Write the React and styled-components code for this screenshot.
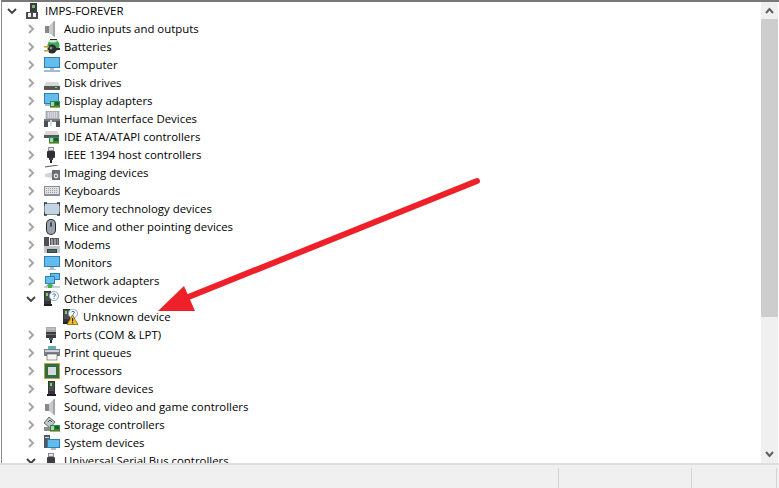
import React from 'react';
import styled, { createGlobalStyle } from 'styled-components';

const GlobalStyle = createGlobalStyle`
  html, body {
    margin: 0;
    padding: 0;
    background: #fff;
  }
`;

const Blue = ({ x = 1, y = 1, w = 14, h = 10 }) => (
  <>
    <rect x={x} y={y} width={w} height={h} fill="#2c7fb8" />
    <rect x={x + 1} y={y + 1} width={w - 2} height={h - 2} fill="#62bcec" />
  </>
);

const Card = ({ x = 6, y = 8 }) => (
  <>
    <rect x={x} y={y} width="10" height="7" fill="#2f8a4f" />
    <rect x={x + 1} y={y + 1} width="3" height="4" fill="#a5d6a9" />
    <rect x={x + 5} y={y + 1} width="4" height="3" fill="#155f33" />
    <rect x={x} y={y + 6} width="10" height="1" fill="#c8a545" />
  </>
);

const Speaker = () => (
  <>
    <rect x="1" y="5" width="4" height="7" fill="#85898b" />
    <path d="M5 5 L10 0 L11 0 L11 16 L10 16 L5 12 Z" fill="#c8cbcd" />
    <path d="M9 1 L11 0 L11 16 L9 15 Z" fill="#a3a6a8" />
  </>
);

const Tower = ({ x = 2, y = 0 }) => (
  <>
    <rect x={x} y={y} width="7" height="15" fill="#333537" />
    <rect x={x + 1} y={y + 1} width="5" height="9" fill="#4c4f52" />
    <rect x={x + 2} y={y + 2} width="2" height="3" fill="#7ed957" />
    <rect x={x - 1} y={y + 13} width="9" height="2" fill="#1f2022" />
  </>
);

const Question = ({ cx = 11, cy = 5 }) => (
  <>
    <circle cx={cx} cy={cy} r="4.5" fill="#fff" stroke="#8aa9c9" />
    <path d={`M${cx - 1.5} ${cy - 1.5} Q${cx} ${cy - 3} ${cx + 1.5} ${cy - 1.5} Q${cx + 1.5} ${cy} ${cx} ${cy + 0.5} V${cy + 1.2} M${cx} ${cy + 2} V${cy + 3}`} fill="none" stroke="#3f76b5" strokeWidth="1" />
  </>
);

const icons = {
  root: (
    <>
      <rect x="5" y="0" width="7" height="9" fill="#3a3d40" />
      <rect x="7" y="2" width="3" height="3" fill="#6fbf5a" />
      <rect x="1" y="9" width="12" height="7" fill="#4a4d50" />
      <rect x="3" y="10" width="8" height="4" fill="#f1f1f1" />
      <rect x="6" y="10" width="2" height="4" fill="#4a4d50" />
    </>
  ),
  audio: <Speaker />,
  battery: (
    <>
      <ellipse cx="9.5" cy="6.5" rx="6" ry="6.5" fill="#43a85a" />
      <ellipse cx="9" cy="2" rx="4" ry="1.6" fill="#cfe9cf" />
      <rect x="6" y="0" width="7" height="1" fill="#2c2c2c" />
      <circle cx="8" cy="10" r="4.5" fill="#2a2d30" />
      <circle cx="7" cy="9" r="1.5" fill="#8a8d90" />
      <rect x="0" y="7" width="5" height="1.5" fill="#c9a227" />
      <rect x="0" y="11" width="5" height="1.5" fill="#c9a227" />
      <rect x="11" y="9" width="5" height="2" fill="#2a2d30" />
    </>
  ),
  computer: (
    <>
      <Blue x={0} y={0} w={16} h={11} />
      <rect x="6" y="11" width="4" height="2" fill="#b6bcc0" />
      <rect x="0" y="13" width="16" height="2" fill="#9fbcd0" />
    </>
  ),
  disk: (
    <>
      <path d="M2 7 L14 7 L16 11 L0 11 Z" fill="#d8d8d8" />
      <rect x="0" y="11" width="16" height="4" fill="#55585b" />
      <rect x="11" y="12" width="2" height="1" fill="#7ed957" />
    </>
  ),
  display: (
    <>
      <Blue x={0} y={0} w={15} h={11} />
      <rect x="1" y="11" width="6" height="2" fill="#9fbcd0" />
      <Card x={6} y={8} />
    </>
  ),
  hid: (
    <>
      <rect x="2" y="0" width="13" height="8" fill="#b9bdc4" stroke="#7c8088" strokeWidth="0.5" />
      <path d="M4 2 H13 M4 4 H13 M4 6 H13" stroke="#eef0f3" strokeDasharray="1 1" />
      <rect x="0" y="8" width="16" height="3" fill="#767a80" />
      <rect x="0" y="10" width="4" height="6" fill="#4a4e55" />
      <rect x="6" y="9" width="2" height="6" fill="#d7dade" />
      <rect x="12" y="10" width="4" height="6" fill="#4a4e55" />
    </>
  ),
  ide: (
    <>
      <path d="M2 2 L13 2 L15 6 L0 6 Z" fill="#d8d8d8" />
      <rect x="0" y="6" width="15" height="3" fill="#55585b" />
      <Card x={5} y={8} />
    </>
  ),
  ieee: (
    <>
      <rect x="4" y="0" width="6" height="4" fill="#8a8d90" />
      <rect x="5" y="1" width="4" height="2" fill="#e4e4e4" />
      <rect x="3" y="4" width="8" height="7" rx="1" fill="#2f3134" />
      <rect x="5" y="11" width="4" height="2" fill="#3d4043" />
      <rect x="6" y="13" width="2" height="3" fill="#222" />
    </>
  ),
  imaging: (
    <>
      <path d="M1 2 L14 0" stroke="#55585b" strokeWidth="1" />
      <path d="M1 9 L9 7 V13 L1 12 Z" fill="#d2d4d6" />
      <rect x="8" y="5" width="8" height="10" fill="#6a6d70" />
      <circle cx="12" cy="11" r="2.4" fill="#e6e6e6" />
      <circle cx="12" cy="11" r="1.1" fill="#3a6ea5" />
    </>
  ),
  keyboard: (
    <>
      <rect x="0" y="3" width="16" height="10" fill="#8b8e92" />
      <rect x="1" y="4" width="14" height="7" fill="#dfe1e3" />
      <path d="M2 5.5 H14 M2 7.5 H14 M2 9.5 H14" stroke="#9da0a5" strokeDasharray="1 1" />
    </>
  ),
  memory: (
    <>
      <rect x="0.5" y="2.5" width="15" height="11" fill="#c3d4e2" stroke="#7f8e9a" />
      <path d="M0 5 V2 H3 M13 2 H16 V5 M16 11 V14 H13 M3 14 H0 V11" fill="none" stroke="#2f3235" strokeWidth="1.4" />
    </>
  ),
  mouse: (
    <>
      <rect x="2" y="0" width="10" height="16" rx="5" fill="#25282b" />
      <rect x="3" y="1" width="8" height="14" rx="4" fill="#9aa3ad" />
      <rect x="6" y="3" width="2" height="5" rx="1" fill="#4a4e55" />
    </>
  ),
  modem: (
    <>
      <rect x="0" y="0" width="5" height="12" fill="#4d5053" />
      <rect x="6" y="1" width="9" height="7" fill="#55585b" />
      <path d="M7 3 H14 M7 5 H14 M7 7 H14" stroke="#d9dbde" strokeDasharray="2 1" />
      <rect x="0" y="9" width="16" height="7" fill="#c4c7ca" />
      <rect x="3" y="12" width="10" height="4" fill="#3e4144" />
      <path d="M4.5 14 H11.5" stroke="#5dd3e8" strokeDasharray="1 1" />
    </>
  ),
  monitor: (
    <>
      <Blue x={0} y={1} w={16} h={11} />
      <rect x="6" y="12" width="4" height="2" fill="#b6bcc0" />
      <rect x="4" y="14" width="8" height="1" fill="#b6bcc0" />
    </>
  ),
  network: (
    <>
      <Blue x={6} y={0} w={10} h={7} />
      <Blue x={1} y={3} w={10} h={8} />
      <rect x="0" y="13" width="16" height="2" fill="#c9cdd0" />
      <path d="M6 10 L10 13 H2 Z" fill="#42b04f" />
      <rect x="4" y="13" width="4" height="2" fill="#42b04f" />
    </>
  ),
  other: (
    <>
      <Tower x={0} y={0} />
      <Question cx={10} cy={5} />
    </>
  ),
  unknown: (
    <>
      <Tower x={0} y={0} />
      <Question cx={10} cy={4.5} />
      <path d="M9.5 6 L15 15.5 H4 Z" fill="#f2bf34" stroke="#8a6414" strokeWidth="0.8" />
      <rect x="9" y="9" width="1.2" height="3.5" fill="#222" />
      <rect x="9" y="13.2" width="1.2" height="1.2" fill="#222" />
    </>
  ),
  ports: (
    <>
      <rect x="2" y="0" width="10" height="5" fill="#a8abae" />
      <path d="M3.5 2 H11" stroke="#f1f1f1" strokeDasharray="1 1" />
      <rect x="2" y="5" width="10" height="6" fill="#3a3d40" />
      <rect x="2" y="7" width="10" height="1" fill="#6f7275" />
      <rect x="5" y="11" width="4" height="2" fill="#55585b" />
      <rect x="6" y="13" width="2" height="3" fill="#222" />
    </>
  ),
  print: (
    <>
      <rect x="4" y="1" width="8" height="4" fill="#5fb0e8" />
      <rect x="6" y="1" width="4" height="2" fill="#55b56a" />
      <rect x="0" y="4" width="16" height="7" fill="#7b7f83" />
      <rect x="1" y="5" width="14" height="2" fill="#cfd2d5" />
      <rect x="3" y="9" width="10" height="6" fill="#f7f7f7" stroke="#55585b" strokeWidth="0.6" />
    </>
  ),
  processor: (
    <>
      <rect x="0" y="0" width="16" height="16" fill="#c2a13e" />
      <rect x="1" y="1" width="14" height="14" fill="#2f6e45" />
      <rect x="4" y="4" width="8" height="8" fill="#d7d9da" />
    </>
  ),
  software: <Tower x={4} y={0} />,
  sound: <Speaker />,
  storage: (
    <>
      <path d="M0 6 L5 0 L11 5 L6 11 Z" fill="#c2c5c8" stroke="#4d5053" strokeWidth="0.8" />
      <path d="M4 5 L6 3 L8 5" fill="none" stroke="#4d5053" />
      <rect x="0" y="10" width="9" height="4" fill="#8a8d90" />
      <Card x={6} y={8} />
    </>
  ),
  system: (
    <>
      <rect x="0" y="0" width="6" height="13" fill="#55585b" />
      <rect x="1" y="2" width="4" height="1" fill="#d7d9da" />
      <Blue x={3} y={4} w={13} h={9} />
      <rect x="7" y="13" width="5" height="2" fill="#b6bcc0" />
    </>
  ),
  usb: (
    <>
      <rect x="4" y="0" width="6" height="4" fill="#8a8d90" />
      <rect x="5" y="1" width="4" height="2" fill="#e4e4e4" />
      <rect x="3" y="4" width="8" height="7" rx="1" fill="#3d4043" />
    </>
  ),
};

const devices = [
  { depth: 0, name: 'IMPS-FOREVER', icon: 'root', open: true },
  { depth: 1, name: 'Audio inputs and outputs', icon: 'audio' },
  { depth: 1, name: 'Batteries', icon: 'battery' },
  { depth: 1, name: 'Computer', icon: 'computer' },
  { depth: 1, name: 'Disk drives', icon: 'disk' },
  { depth: 1, name: 'Display adapters', icon: 'display' },
  { depth: 1, name: 'Human Interface Devices', icon: 'hid' },
  { depth: 1, name: 'IDE ATA/ATAPI controllers', icon: 'ide' },
  { depth: 1, name: 'IEEE 1394 host controllers', icon: 'ieee' },
  { depth: 1, name: 'Imaging devices', icon: 'imaging' },
  { depth: 1, name: 'Keyboards', icon: 'keyboard' },
  { depth: 1, name: 'Memory technology devices', icon: 'memory' },
  { depth: 1, name: 'Mice and other pointing devices', icon: 'mouse' },
  { depth: 1, name: 'Modems', icon: 'modem' },
  { depth: 1, name: 'Monitors', icon: 'monitor' },
  { depth: 1, name: 'Network adapters', icon: 'network' },
  { depth: 1, name: 'Other devices', icon: 'other', open: true },
  { depth: 2, name: 'Unknown device', icon: 'unknown', leaf: true },
  { depth: 1, name: 'Ports (COM & LPT)', icon: 'ports' },
  { depth: 1, name: 'Print queues', icon: 'print' },
  { depth: 1, name: 'Processors', icon: 'processor' },
  { depth: 1, name: 'Software devices', icon: 'software' },
  { depth: 1, name: 'Sound, video and game controllers', icon: 'sound' },
  { depth: 1, name: 'Storage controllers', icon: 'storage' },
  { depth: 1, name: 'System devices', icon: 'system' },
  { depth: 1, name: 'Universal Serial Bus controllers', icon: 'usb', open: true },
];

const Frame = styled.div`
  position: relative;
  width: 779px;
  height: 488px;
  display: flex;
  flex-direction: column;
  overflow: hidden;
  background: #fff;
  font-family: 'Open Sans', 'Noto Sans', sans-serif;
`;

const Body = styled.div`
  flex: 1;
  min-height: 0;
  display: flex;
  margin-left: 1px;
  border-top: 2px solid #787878;
  border-left: 1px solid #8a8a8a;
  padding-right: 1px;
`;

const Tree = styled.ul`
  flex: 1;
  min-width: 0;
  margin: 0;
  padding: 0;
  list-style: none;
  overflow: hidden;
`;

const Row = styled.li`
  height: 18px;
  display: flex;
  align-items: center;
  padding-left: ${(p) => 2 + p.$depth * 19}px;
  font-size: 11.4px;
  color: #000;
  white-space: nowrap;
`;

const Expander = styled.span`
  width: 16px;
  height: 16px;
  flex: none;
  margin-right: 5px;
  display: flex;
  align-items: center;
  justify-content: center;
`;

const Label = styled.span`
  margin-left: 4px;
  line-height: 18px;
`;

const Scrollbar = styled.div`
  width: 17px;
  flex: none;
  display: flex;
  flex-direction: column;
  background: #f0f0f0;
`;

const ScrollButton = styled.div`
  height: 17px;
  flex: none;
  display: flex;
  align-items: center;
  justify-content: center;
`;

const ScrollTrack = styled.div`
  flex: 1;
`;

const ScrollThumb = styled.div`
  height: 298px;
  background: #cdcdcd;
`;

const StatusBar = styled.div`
  height: 25px;
  flex: none;
  display: flex;
  justify-content: flex-end;
  padding: 3px 2px 0 0;
  box-sizing: border-box;
  background: #f0f0f0;
  border-top: 2px solid #dedede;
`;

const StatusCell = styled.div`
  width: ${(p) => p.$width}px;
  box-sizing: border-box;
  border-left: 1px solid #d5d5d5;
  &:last-child {
    border-right: 1px solid #d5d5d5;
  }
`;

const ArrowLayer = styled.svg`
  position: absolute;
  left: 0;
  top: 0;
  pointer-events: none;
`;

const Chevron = ({ open }) => (
  <svg width="10" height="10" viewBox="0 0 10 10">
    {open ? (
      <path d="M1 3 L5 7 L9 3" fill="none" stroke="#404040" strokeWidth="1.9" />
    ) : (
      <path d="M3 1 L7 5 L3 9" fill="none" stroke="#a6a6a6" strokeWidth="1.9" />
    )}
  </svg>
);

const ScrollArrow = ({ up }) => (
  <svg width="9" height="7" viewBox="0 0 9 7">
    <path d={up ? 'M1 6 L4.5 2 L8 6' : 'M1 1 L4.5 5 L8 1'} fill="none" stroke="#606060" strokeWidth="2" />
  </svg>
);

const DeviceIcon = ({ name }) => (
  <svg width="16" height="16" viewBox="0 0 16 16" style={{ flex: 'none' }}>
    {icons[name]}
  </svg>
);

export default function App() {
  return (
    <Frame>
      <GlobalStyle />
      <Body>
        <Tree>
          {devices.map((d) => (
            <Row key={d.name} $depth={d.depth}>
              <Expander>{!d.leaf && <Chevron open={d.open} />}</Expander>
              <DeviceIcon name={d.icon} />
              <Label>{d.name}</Label>
            </Row>
          ))}
        </Tree>
        <Scrollbar>
          <ScrollButton>
            <ScrollArrow up />
          </ScrollButton>
          <ScrollThumb />
          <ScrollTrack />
          <ScrollButton>
            <ScrollArrow />
          </ScrollButton>
        </Scrollbar>
      </Body>
      <StatusBar>
        <StatusCell $width={133} />
        <StatusCell $width={86} />
      </StatusBar>
      <ArrowLayer width="779" height="488" viewBox="0 0 779 488">
        <path d="M477 181 L186 298" stroke="#ee2029" strokeWidth="6" strokeLinecap="round" fill="none" />
        <path d="M158 311 L184 286 L195 311 Z" fill="#ee2029" />
      </ArrowLayer>
    </Frame>
  );
}
